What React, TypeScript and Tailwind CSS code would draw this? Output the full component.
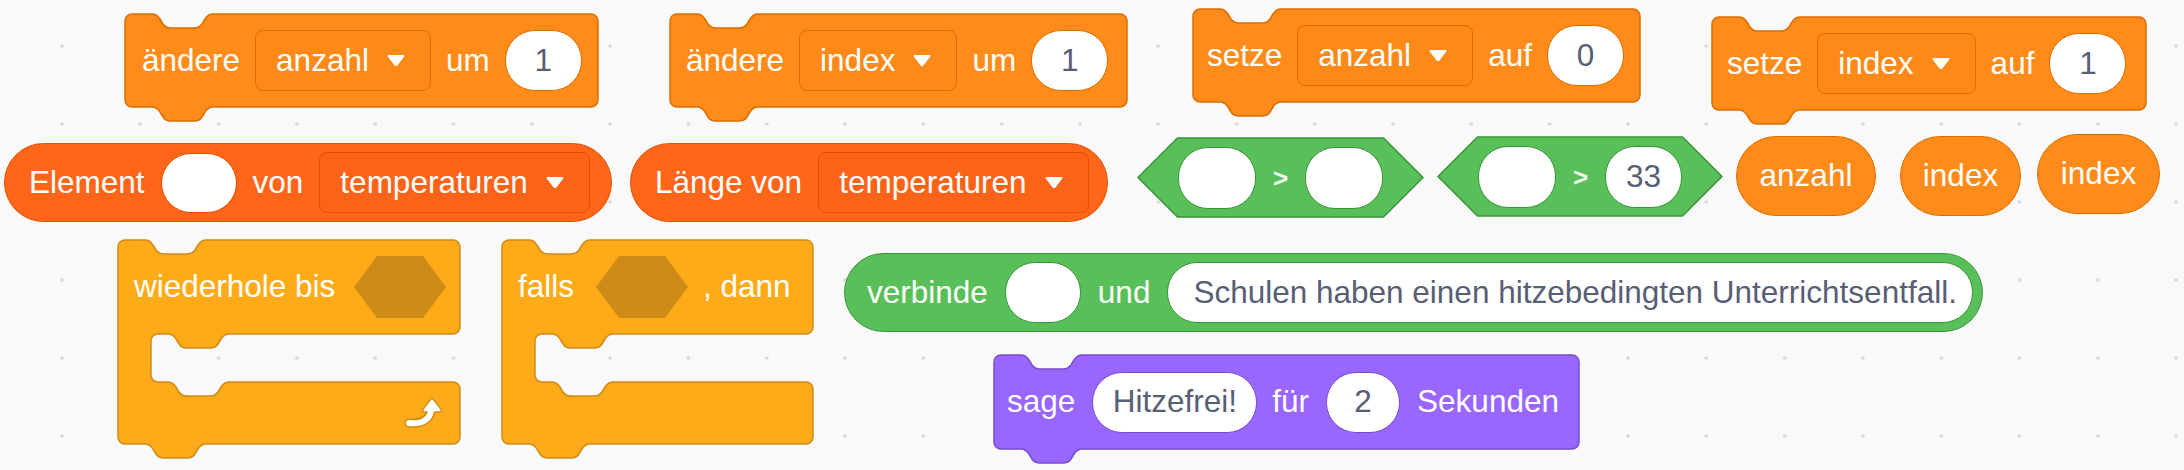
import type { ReactNode } from "react";

const FONT = "font-['Liberation_Sans',Arial,sans-serif]";

// notch going right from x (bump goes down by 14)
function notchR(x: number, y: number) {
  return `H${x} C${x + 4},${y} ${x + 6},${y + 2} ${x + 8},${y + 5} L${x + 11},${y + 10} C${x + 13},${y + 13} ${x + 15},${y + 14} ${x + 19},${y + 14} H${x + 42} C${x + 46},${y + 14} ${x + 48},${y + 13} ${x + 50},${y + 10} L${x + 53},${y + 5} C${x + 55},${y + 2} ${x + 57},${y} ${x + 61},${y}`;
}

// notch going left, ends at x
function notchL(x: number, y: number) {
  return `H${x + 61} C${x + 57},${y} ${x + 55},${y + 2} ${x + 53},${y + 5} L${x + 50},${y + 10} C${x + 48},${y + 13} ${x + 46},${y + 14} ${x + 42},${y + 14} H${x + 19} C${x + 15},${y + 14} ${x + 13},${y + 13} ${x + 11},${y + 10} L${x + 8},${y + 5} C${x + 6},${y + 2} ${x + 4},${y} ${x},${y}`;
}

function stackPath(w: number, h: number) {
  const r = 7;
  return `M0,${r} A${r},${r} 0 0 1 ${r},0 ${notchR(27, 0)} H${w - r} A${r},${r} 0 0 1 ${w},${r} V${h - r} A${r},${r} 0 0 1 ${w - r},${h} ${notchL(27, h)} H${r} A${r},${r} 0 0 1 0,${h - r} Z`;
}

function cPath(w: number) {
  const r = 7;
  const arm = 33;
  const top = 94;
  const mouth = 142;
  const bottom = 204;
  return [
    `M0,${r} A${r},${r} 0 0 1 ${r},0 ${notchR(27, 0)} H${w - r} A${r},${r} 0 0 1 ${w},${r}`,
    `V${top - r} A${r},${r} 0 0 1 ${w - r},${top} ${notchL(arm + 17, top)}`,
    `H${arm + r} A${r},${r} 0 0 0 ${arm},${top + r} V${mouth - r} A${r},${r} 0 0 0 ${arm + r},${mouth}`,
    `${notchR(arm + 17, mouth)} H${w - r} A${r},${r} 0 0 1 ${w},${mouth + r}`,
    `V${bottom - r} A${r},${r} 0 0 1 ${w - r},${bottom} ${notchL(27, bottom)} H${r} A${r},${r} 0 0 1 0,${bottom - r} Z`,
  ].join(" ");
}

function Caret() {
  return (
    <svg width="20" height="13" viewBox="0 0 20 13">
      <path d="M2.5 2 H17.5 L10.8 10.6 Q10 11.6 9.2 10.6 Z" fill="white" stroke="white" strokeWidth="2" strokeLinejoin="round" />
    </svg>
  );
}

function Dropdown({ label, className }: { label: string; className: string }) {
  return (
    <div className={`flex h-[61px] shrink-0 items-center gap-[17px] rounded-[8px] border pl-[20px] pr-[24px] ${className}`}>
      <span>{label}</span>
      <Caret />
    </div>
  );
}

function Oval({ value, className }: { value?: string; className: string }) {
  return (
    <div className={`flex shrink-0 items-center justify-center rounded-[30px] border bg-white text-[#575E75] ${className}`}>
      {value}
    </div>
  );
}

function Stack({
  className,
  w,
  h,
  fill,
  stroke,
  pad,
  children,
}: {
  className: string;
  w: number;
  h: number;
  fill: string;
  stroke: string;
  pad: string;
  children: ReactNode;
}) {
  return (
    <div className={`absolute ${className}`}>
      <svg className="absolute left-0 top-0 overflow-visible" width={w} height={h}>
        <path d={stackPath(w, h)} fill={fill} stroke={stroke} strokeWidth="1.5" />
      </svg>
      <div className={`relative flex h-full items-center gap-[15px] whitespace-nowrap text-white ${pad}`}>{children}</div>
    </div>
  );
}

function Hex({ className, w, h, children }: { className: string; w: number; h: number; children: ReactNode }) {
  const p = h / 2;
  return (
    <div className={`absolute ${className}`}>
      <svg className="absolute left-0 top-0 overflow-visible" width={w} height={h}>
        <polygon
          points={`0,${p} ${p},0 ${w - p},0 ${w},${p} ${w - p},${h} ${p},${h}`}
          fill="#59C059"
          stroke="#389438"
          strokeWidth="1.5"
          strokeLinejoin="round"
        />
      </svg>
      <div className="relative flex h-full items-center justify-center gap-[17px] text-white">{children}</div>
    </div>
  );
}

function Gt() {
  return <span className="text-[26px] font-bold text-[#F0FAF0]">&gt;</span>;
}

function Slot() {
  return (
    <svg width="92" height="62" viewBox="0 0 92 62" className="shrink-0">
      <polygon points="0,31 23,0 69,0 92,31 69,62 23,62" fill="#CF8B17" />
    </svg>
  );
}

function CBlock({ className, w, children }: { className: string; w: number; children: ReactNode }) {
  return (
    <div className={`absolute h-[204px] ${className}`}>
      <svg className="absolute left-0 top-0 overflow-visible" width={w} height={204}>
        <path d={cPath(w)} fill="#FFAB19" stroke="#CF8B17" strokeWidth="1.5" />
      </svg>
      <div className="relative flex h-[94px] items-center whitespace-nowrap pl-[16px] text-white">{children}</div>
    </div>
  );
}

function RepeatArrow() {
  return (
    <svg className="absolute left-[284px] top-[157px]" width="40" height="34" viewBox="0 0 40 34">
      <path d="M7 26 C18 27 27 24 29 14" fill="none" stroke="#CF8B17" strokeWidth="9" strokeLinecap="round" />
      <polygon points="30,2 39,14 21,14" fill="#CF8B17" stroke="#CF8B17" strokeWidth="3" strokeLinejoin="round" />
      <path d="M7 26 C18 27 27 24 29 14" fill="none" stroke="white" strokeWidth="6" strokeLinecap="round" />
      <polygon points="30,3 38,13.5 22,13.5" fill="white" stroke="white" strokeWidth="1.5" strokeLinejoin="round" />
    </svg>
  );
}

function Grid() {
  return (
    <svg className="absolute inset-0" width="2184" height="470">
      <defs>
        <pattern id="dots" x="60" y="44" width="78.3" height="78" patternUnits="userSpaceOnUse">
          <path d="M0 2 H4 M2 0 V4" stroke="#d6d6d6" strokeWidth="1.3" />
        </pattern>
      </defs>
      <rect width="2184" height="470" fill="url(#dots)" />
    </svg>
  );
}

export default function App() {
  return (
    <div className={`relative h-[470px] w-[2184px] overflow-hidden bg-[#F9F9F9] text-[31.5px] leading-none ${FONT}`}>
      <Grid />

      {/* Variablen-Blöcke */}
      <Stack className="left-[125px] top-[14px] h-[93px] w-[473px]" w={473} h={93} fill="#FF8C1A" stroke="#DB6E00" pad="pl-[17px]">
        <span>ändere</span>
        <Dropdown label="anzahl" className="border-[#DB6E00] bg-[#FD8A18]" />
        <span>um</span>
        <Oval value="1" className="h-[61px] w-[77px] border-[#DB6E00]" />
      </Stack>
      <Stack className="left-[670px] top-[14px] h-[93px] w-[457px]" w={457} h={93} fill="#FF8C1A" stroke="#DB6E00" pad="pl-[16px]">
        <span>ändere</span>
        <Dropdown label="index" className="border-[#DB6E00] bg-[#FD8A18]" />
        <span>um</span>
        <Oval value="1" className="h-[61px] w-[77px] border-[#DB6E00]" />
      </Stack>
      <Stack className="left-[1193px] top-[9px] h-[93px] w-[447px]" w={447} h={93} fill="#FF8C1A" stroke="#DB6E00" pad="pl-[14px]">
        <span>setze</span>
        <Dropdown label="anzahl" className="border-[#DB6E00] bg-[#FD8A18]" />
        <span>auf</span>
        <Oval value="0" className="h-[61px] w-[77px] border-[#DB6E00]" />
      </Stack>
      <Stack className="left-[1712px] top-[17px] h-[93px] w-[434px]" w={434} h={93} fill="#FF8C1A" stroke="#DB6E00" pad="pl-[15px]">
        <span>setze</span>
        <Dropdown label="index" className="border-[#DB6E00] bg-[#FD8A18]" />
        <span>auf</span>
        <Oval value="1" className="h-[61px] w-[77px] border-[#DB6E00]" />
      </Stack>

      {/* Listen-Reporter */}
      <div className="absolute left-[4px] top-[143px] flex h-[79px] w-[608px] items-center gap-[16px] whitespace-nowrap rounded-full border-[1.5px] border-[#E64D00] bg-[#FF661A] pl-[24px] text-white">
        <span>Element</span>
        <Oval className="h-[60px] w-[76px] border-[#E64D00]" />
        <span>von</span>
        <Dropdown label="temperaturen" className="border-[#E64D00] bg-[#FB6318]" />
      </div>
      <div className="absolute left-[630px] top-[143px] flex h-[79px] w-[478px] items-center gap-[16px] whitespace-nowrap rounded-full border-[1.5px] border-[#E64D00] bg-[#FF661A] pl-[24px] text-white">
        <span>Länge von</span>
        <Dropdown label="temperaturen" className="border-[#E64D00] bg-[#FB6318]" />
      </div>

      {/* Vergleiche */}
      <Hex className="left-[1138px] top-[138px] h-[79px] w-[285px]" w={285} h={79}>
        <Oval className="h-[62px] w-[78px] border-[#389438]" />
        <Gt />
        <Oval className="h-[62px] w-[78px] border-[#389438]" />
      </Hex>
      <Hex className="left-[1438px] top-[137px] h-[79px] w-[284px]" w={284} h={79}>
        <Oval className="h-[62px] w-[78px] border-[#389438]" />
        <Gt />
        <Oval value="33" className="h-[62px] w-[77px] border-[#389438]" />
      </Hex>

      {/* Variablen-Reporter */}
      <div className="absolute left-[1736px] top-[136px] flex h-[80px] w-[140px] items-center justify-center rounded-full border-[1.5px] border-[#DB6E00] bg-[#FF8C1A] text-white">
        anzahl
      </div>
      <div className="absolute left-[1900px] top-[136px] flex h-[80px] w-[121px] items-center justify-center rounded-full border-[1.5px] border-[#DB6E00] bg-[#FF8C1A] text-white">
        index
      </div>
      <div className="absolute left-[2037px] top-[134px] flex h-[80px] w-[123px] items-center justify-center rounded-full border-[1.5px] border-[#DB6E00] bg-[#FF8C1A] text-white">
        index
      </div>

      {/* Steuerung */}
      <CBlock className="left-[118px] top-[240px] w-[342px]" w={342}>
        <span>wiederhole bis</span>
        <div className="ml-[19px]">
          <Slot />
        </div>
        <RepeatArrow />
      </CBlock>
      <CBlock className="left-[502px] top-[240px] w-[311px]" w={311}>
        <span>falls</span>
        <div className="ml-[22px] mr-[15px]">
          <Slot />
        </div>
        <span>, dann</span>
      </CBlock>

      {/* verbinde */}
      <div className="absolute left-[844px] top-[253px] flex h-[79px] w-[1139px] items-center gap-[17px] whitespace-nowrap rounded-full border-[1.5px] border-[#389438] bg-[#59C059] pl-[22px] text-white">
        <span>verbinde</span>
        <Oval className="h-[61px] w-[76px] border-[#389438]" />
        <span>und</span>
        <div className="flex h-[61px] w-[806px] shrink-0 items-center rounded-[30px] border border-[#389438] bg-white pl-[25px] text-[#575E75]">
          Schulen haben einen hitzebedingten Unterrichtsentfall.
        </div>
      </div>

      {/* sage */}
      <Stack className="left-[994px] top-[355px] h-[94px] w-[585px]" w={585} h={94} fill="#9966FF" stroke="#774DCB" pad="pl-[13px]">
        <span>sage</span>
        <Oval value="Hitzefrei!" className="ml-[2px] h-[61px] w-[165px] border-[#774DCB]" />
        <span>für</span>
        <Oval value="2" className="ml-[2px] h-[61px] w-[74px] border-[#774DCB]" />
        <span className="ml-[2px]">Sekunden</span>
      </Stack>
    </div>
  );
}
